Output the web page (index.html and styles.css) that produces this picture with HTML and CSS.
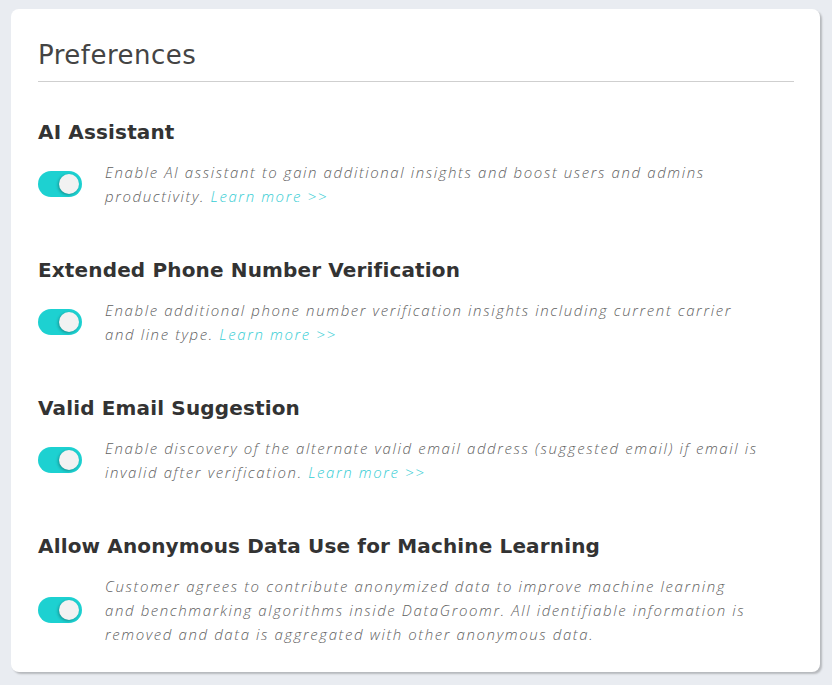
FILE: index.html
```html
<!DOCTYPE html>
<html lang="en">
<head>
<meta charset="utf-8">
<title>Preferences</title>
<link rel="stylesheet" href="styles.css">
</head>
<body>
<div class="card">
  <h1 class="title">Preferences</h1>

  <section class="pref">
    <h2 class="pref-name">AI Assistant</h2>
    <div class="pref-row">
      <span class="toggle"><span class="knob"></span></span>
      <p class="pref-desc">Enable AI assistant to gain additional insights and boost users and admins productivity. <a class="more" href="#">Learn more &gt;&gt;</a></p>
    </div>
  </section>

  <section class="pref">
    <h2 class="pref-name">Extended Phone Number Verification</h2>
    <div class="pref-row">
      <span class="toggle"><span class="knob"></span></span>
      <p class="pref-desc">Enable additional phone number verification insights including current carrier and line type. <a class="more" href="#">Learn more &gt;&gt;</a></p>
    </div>
  </section>

  <section class="pref">
    <h2 class="pref-name">Valid Email Suggestion</h2>
    <div class="pref-row">
      <span class="toggle"><span class="knob"></span></span>
      <p class="pref-desc">Enable discovery of the alternate valid email address (suggested email) if email is invalid after verification. <a class="more" href="#">Learn more &gt;&gt;</a></p>
    </div>
  </section>

  <section class="pref">
    <h2 class="pref-name">Allow Anonymous Data Use for Machine Learning</h2>
    <div class="pref-row">
      <span class="toggle"><span class="knob"></span></span>
      <p class="pref-desc">Customer agrees to contribute anonymized data to improve machine learning and benchmarking algorithms inside DataGroomr. All identifiable information is removed and data is aggregated with other anonymous data.</p>
    </div>
  </section>
</div>
</body>
</html>
```

FILE: styles.css
```css
* { box-sizing: border-box; }
html, body { margin: 0; padding: 0; }
body {
  background: #e9ecf1;
  font-family: "DejaVu Sans", "Open Sans", sans-serif;
  padding: 9px 11px 0 11px;
  width: 832px;
  height: 685px;
  overflow: hidden;
}
.card {
  width: 809px;
  background: #fff;
  border-radius: 8px;
  box-shadow: 2px 2px 2px rgba(0,0,0,0.22);
  padding: 31px 26px 26px 27px;
}
.title {
  margin: 0;
  font-size: 26px;
  line-height: 30px;
  font-weight: 400;
  letter-spacing: 0.5px;
  color: #444;
  padding-bottom: 11px;
  border-bottom: 1px solid #cfcfcf;
}
.pref { margin-top: 37px; }
.pref + .pref { margin-top: 49px; }
.pref-name {
  margin: 0;
  font-size: 20px;
  line-height: 26px;
  font-weight: 700;
  letter-spacing: 0.15px;
  color: #333;
}
.pref-row {
  margin-top: 15px;
  display: flex;
  align-items: center;
  gap: 23px;
}
.toggle {
  flex: none;
  position: relative;
  width: 44px;
  height: 26px;
  border-radius: 13px;
  background: #1dd1d1;
}
.knob {
  position: absolute;
  top: 3px;
  right: 3px;
  width: 20px;
  height: 20px;
  border-radius: 50%;
  background: #f2f2f2;
  box-shadow: -1px 1px 3px rgba(0,0,0,0.3);
}
.pref-desc {
  margin: 0;
  width: 656px;
  font-family: "Open Sans", "DejaVu Sans", sans-serif;
  font-size: 15px;
  line-height: 24px;
  font-style: italic;
  font-weight: 300;
  letter-spacing: 1.6px;
  color: #5f5f5f;
}
.more {
  color: #36cdd4;
  text-decoration: none;
}
```
